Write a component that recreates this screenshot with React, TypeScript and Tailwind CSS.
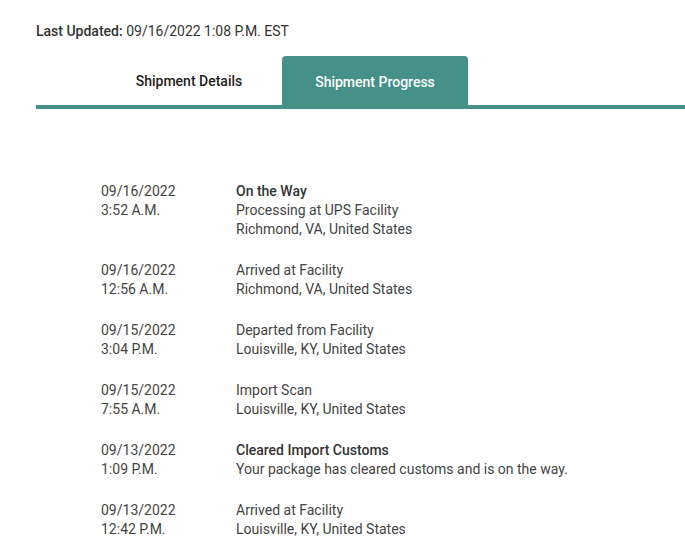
import React from "react";

type Event = {
  date: string;
  time: string;
  title: string;
  bold?: boolean;
  lines: string[];
};

const events: Event[] = [
  { date: "09/16/2022", time: "3:52 A.M.", title: "On the Way", bold: true, lines: ["Processing at UPS Facility", "Richmond, VA, United States"] },
  { date: "09/16/2022", time: "12:56 A.M.", title: "Arrived at Facility", lines: ["Richmond, VA, United States"] },
  { date: "09/15/2022", time: "3:04 P.M.", title: "Departed from Facility", lines: ["Louisville, KY, United States"] },
  { date: "09/15/2022", time: "7:55 A.M.", title: "Import Scan", lines: ["Louisville, KY, United States"] },
  { date: "09/13/2022", time: "1:09 P.M.", title: "Cleared Import Customs", bold: true, lines: ["Your package has cleared customs and is on the way."] },
  { date: "09/13/2022", time: "12:42 P.M.", title: "Arrived at Facility", lines: ["Louisville, KY, United States"] },
];

export default function App() {
  return (
    <div className="min-h-screen bg-white pl-9 pt-[22px] font-['Roboto',sans-serif] text-[14px]">
      <p className="leading-[19px] text-[#333]">
        <span className="font-medium">Last Updated:</span> 09/16/2022 1:08 P.M. EST
      </p>

      {/* tabs */}
      <div className="mt-[15px] flex border-b-4 border-[#45918a] pl-[60px]">
        <button className="h-[49px] w-[186px] pt-[2px] font-medium text-[#222]">Shipment Details</button>
        <button className="h-[49px] w-[186px] rounded-t-[4px] bg-[#45918a] pt-[3px] font-medium text-white">
          Shipment Progress
        </button>
      </div>

      {/* progress list */}
      <div className="mt-[73px] flex flex-col gap-[22px] pl-[65px] leading-[19px] text-[#444]">
        {events.map((e, i) => (
          <div key={i} className="flex">
            <div className="w-[135px]">
              <p>{e.date}</p>
              <p>{e.time}</p>
            </div>
            <div>
              <p className={e.bold ? "font-medium text-[#333]" : ""}>{e.title}</p>
              {e.lines.map((l) => (
                <p key={l}>{l}</p>
              ))}
            </div>
          </div>
        ))}
      </div>
    </div>
  );
}
